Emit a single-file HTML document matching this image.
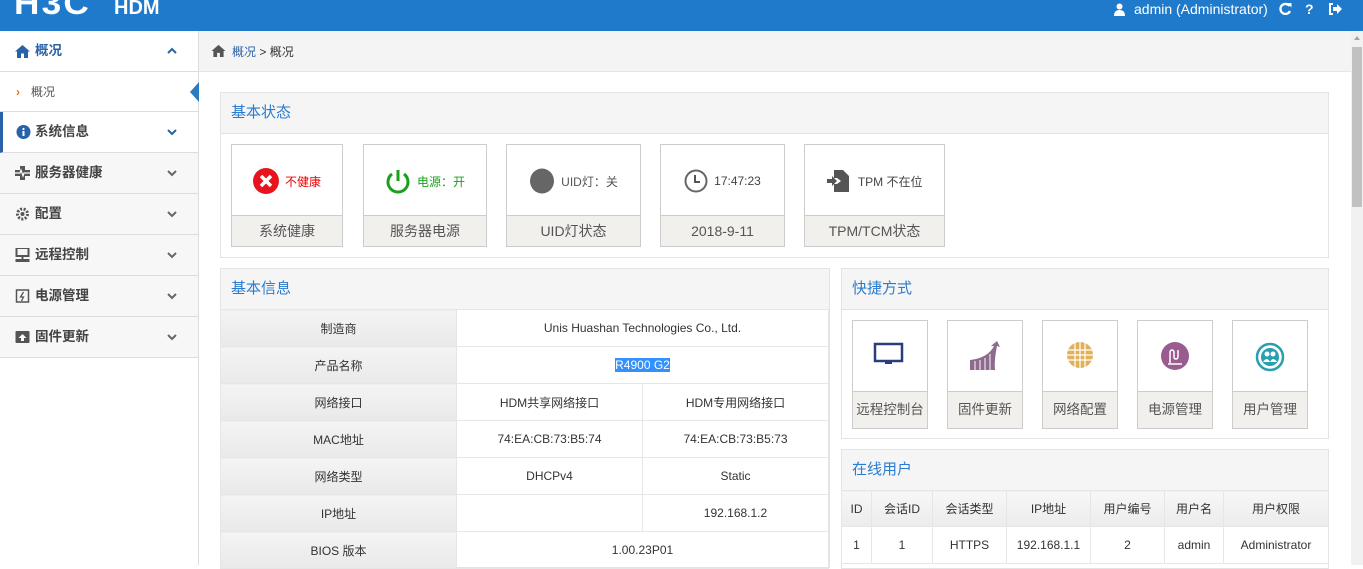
<!DOCTYPE html>
<html><head><meta charset="utf-8"><style>
*{box-sizing:border-box;margin:0;padding:0}
body{width:1363px;height:565px;overflow:hidden;font-family:"Liberation Sans","Noto Sans CJK SC",sans-serif;font-size:13px;color:#333;background:#fff;position:relative}
.abs{position:absolute}
#hdr{left:0;top:0;width:1363px;height:31px;background:#1f7acb;color:#fff;overflow:hidden}
#side{left:0;top:31px;width:199px;height:534px;background:#fff;border-right:1px solid #ddd}
.mi{position:absolute;left:0;width:198px;height:41px;border-bottom:1px solid #ddd;background:#f7f7f7;font-size:13.5px;font-weight:bold;color:#444;line-height:40px;padding-left:35px}
.mi .ic{position:absolute;left:15px;top:13px;width:15px;height:14px}
.mi .ch{position:absolute;left:166px;top:16px}
.panel{position:absolute;border:1px solid #e3e3e3;background:#fff}
.ph{height:41px;background:#f5f5f5;border-bottom:1px solid #e3e3e3;color:#2b7bcf;font-size:15px;line-height:40px;padding-left:10px}
.card{position:absolute;top:144px;height:103px;border:1px solid #ccc;background:#fff}
.card .lb{position:absolute;left:0;right:0;bottom:0;height:31px;border-top:1px solid #ccc;background:#f1f0ec;text-align:center;line-height:30px;font-size:14px;color:#555}
.card .tp{position:absolute;left:0;right:0;top:22px;height:28px;display:flex;align-items:center;justify-content:center;font-size:12px;gap:6px}
table{border-collapse:collapse}
.info td{height:37px;border:1px solid #e6e6e6;text-align:center;font-size:12px;color:#333;padding:0}
.info td.k{background:linear-gradient(#f4f4f4,#e9e9e9);width:236px}
.qc{position:absolute;top:320px;width:76px;height:109px;border:1px solid #ccc;background:#fff}
.qc .lb{position:absolute;left:0;right:0;bottom:0;height:37px;border-top:1px solid #ccc;background:#f1f0ec;text-align:center;line-height:36px;font-size:13.5px;color:#555}
.qc svg{position:absolute;left:20px;top:20px}
.ou td{border:1px solid #e6e6e6;text-align:center;font-size:12px;height:37px;padding:0}
.ou tr.h td{background:linear-gradient(#f7f7f7,#ececec);height:36px}
</style></head><body>
<div id="hdr" class="abs">
 <div class="abs" style="left:14px;top:-15px;font-size:32px;font-weight:bold;letter-spacing:2px;transform:scaleX(1.1);transform-origin:left top">H3C</div>
 <div class="abs" style="left:114px;top:-3px;font-size:20px;font-weight:bold">HDM</div>
 <svg class="abs" style="left:1113px;top:3px" width="13" height="13" viewBox="0 0 13 13"><circle cx="6.5" cy="3.5" r="3" fill="#fff"/><path d="M1 13 Q1 7 6.5 7 Q12 7 12 13Z" fill="#fff"/></svg>
 <div class="abs" style="left:1134px;top:1px;font-size:14px">admin (Administrator)</div>
 <svg class="abs" style="left:1279px;top:2px" width="13" height="13" viewBox="0 0 13 13"><path d="M10.5 4A5 5 0 1 0 11 9" fill="none" stroke="#fff" stroke-width="2.3"/><path d="M8 1H12.5V5.5Z" fill="#fff"/></svg>
 <div class="abs" style="left:1305px;top:1px;font-size:14px;font-weight:bold">?</div>
 <svg class="abs" style="left:1328px;top:3px" width="14" height="12" viewBox="0 0 14 12"><path d="M5 1H2V11H5" stroke="#fff" stroke-width="2" fill="none"/><path d="M5 4H9V1L14 6L9 11V8H5Z" fill="#fff"/></svg>
</div>
<div id="side" class="abs">
 <div class="mi" style="top:0;background:#fff;color:#2a62a8"><svg class="ic" viewBox="0 0 15 14"><path d="M7.5 1L0 7.5H2V14H6V9.5H9V14H13V7.5H15Z" fill="#2a62a8"/></svg>概况<svg class="ch" width="12" height="8" viewBox="0 0 12 8"><path d="M2 6L6 2L10 6" stroke="#2a62a8" stroke-width="2" fill="none"/></svg></div>
 <div class="mi" style="top:41px;height:40px;background:#fff;font-weight:normal;font-size:12px;color:#555;padding-left:31px;line-height:40px;border-bottom:1px solid #ddd"><span style="position:absolute;left:16px;color:#f06a2a;font-weight:bold">›</span>概况
  <div class="abs" style="left:190px;top:10px;width:0;height:0;border-top:10px solid transparent;border-bottom:10px solid transparent;border-right:9px solid #2a7bbf"></div></div>
 <div class="mi" style="top:81px;background:#fff;border-left:3px solid #2a62a8;padding-left:32px"><svg class="ic" style="left:13px" viewBox="0 0 14 14"><circle cx="7" cy="7" r="7" fill="#2a62a8"/><rect x="6" y="6" width="2" height="5" fill="#fff"/><circle cx="7" cy="4" r="1.1" fill="#fff"/></svg>系统信息<svg class="ch" style="left:163px" width="12" height="8" viewBox="0 0 12 8"><path d="M2 2L6 6L10 2" stroke="#2a62a8" stroke-width="2" fill="none"/></svg></div>
 <div class="mi" style="top:122px"><svg class="ic" viewBox="0 0 15 14"><path d="M5 0H10V4H15V10H10V14H5V10H0V4H5Z" fill="#555"/><path d="M0 7H5L6 4L8 10L9 7H15" stroke="#fff" stroke-width="1.2" fill="none"/></svg>服务器健康<svg class="ch" width="12" height="8" viewBox="0 0 12 8"><path d="M2 2L6 6L10 2" stroke="#666" stroke-width="2" fill="none"/></svg></div>
 <div class="mi" style="top:163px"><svg class="ic" viewBox="0 0 14 14"><circle cx="7" cy="7" r="5" fill="none" stroke="#555" stroke-width="3" stroke-dasharray="2 1.5"/><circle cx="7" cy="7" r="2" fill="#555"/></svg>配置<svg class="ch" width="12" height="8" viewBox="0 0 12 8"><path d="M2 2L6 6L10 2" stroke="#666" stroke-width="2" fill="none"/></svg></div>
 <div class="mi" style="top:204px"><svg class="ic" viewBox="0 0 14 14"><rect x="1" y="0" width="12" height="8" fill="none" stroke="#555" stroke-width="2"/><rect x="6" y="8" width="2" height="3" fill="#555"/><rect x="0" y="11" width="14" height="3" fill="#555"/></svg>远程控制<svg class="ch" width="12" height="8" viewBox="0 0 12 8"><path d="M2 2L6 6L10 2" stroke="#666" stroke-width="2" fill="none"/></svg></div>
 <div class="mi" style="top:245px"><svg class="ic" viewBox="0 0 14 14"><rect x="1" y="1" width="12" height="12" fill="none" stroke="#555" stroke-width="1.5"/><path d="M8 3L5 8H8L6 12" stroke="#555" stroke-width="1.3" fill="none"/></svg>电源管理<svg class="ch" width="12" height="8" viewBox="0 0 12 8"><path d="M2 2L6 6L10 2" stroke="#666" stroke-width="2" fill="none"/></svg></div>
 <div class="mi" style="top:286px"><svg class="ic" viewBox="0 0 14 14"><rect x="0" y="1" width="14" height="12" rx="1" fill="#555"/><path d="M7 4L11 8H3Z" fill="#fff"/><rect x="5.5" y="8" width="3" height="3" fill="#fff"/></svg>固件更新<svg class="ch" width="12" height="8" viewBox="0 0 12 8"><path d="M2 2L6 6L10 2" stroke="#666" stroke-width="2" fill="none"/></svg></div>
</div>
<div class="abs" style="left:199px;top:31px;width:1152px;height:41px;background:#f4f4f4;border-bottom:1px solid #e5e5e5">
 <svg class="abs" style="left:12px;top:13px" width="15" height="13" viewBox="0 0 15 14"><path d="M7.5 1L0 7.5H2V14H6V9.5H9V14H13V7.5H15Z" fill="#555"/></svg>
 <div class="abs" style="left:33px;top:12px;font-size:12px"><span style="color:#2a62a8">概况</span> &gt; 概况</div>
</div>
<div class="abs" style="left:1351px;top:31px;width:12px;height:534px;background:#f1f1f1"><div style="position:absolute;left:1px;top:16px;width:10px;height:160px;background:#c1c1c1"></div><div style="position:absolute;left:3px;top:5px;border-left:3px solid transparent;border-right:3px solid transparent;border-bottom:4px solid #a3a3a3"></div></div>

<div class="panel" style="left:220px;top:92px;width:1109px;height:166px"><div class="ph">基本状态</div></div>
<div class="card" style="left:231px;width:112px"><div class="tp" style="color:#e00"><svg width="26" height="26" viewBox="0 0 26 26"><circle cx="13" cy="13" r="13" fill="#e8141d"/><path d="M8 8L18 18M18 8L8 18" stroke="#fff" stroke-width="3.5"/></svg>不健康</div><div class="lb">系统健康</div></div>
<div class="card" style="left:363px;width:124px"><div class="tp" style="color:#1aa11a"><svg width="26" height="26" viewBox="0 0 26 26"><path d="M7 6A10 10 0 1 0 19 6" fill="none" stroke="#1aa11a" stroke-width="3"/><path d="M13 2V13" stroke="#1aa11a" stroke-width="3"/></svg>电源：开</div><div class="lb">服务器电源</div></div>
<div class="card" style="left:506px;width:135px"><div class="tp" style="color:#555"><svg width="26" height="26"><ellipse cx="13" cy="13" rx="12" ry="12.5" fill="#666"/></svg>UID灯：关</div><div class="lb">UID灯状态</div></div>
<div class="card" style="left:660px;width:125px"><div class="tp" style="color:#444"><svg width="24" height="24" viewBox="0 0 24 24"><circle cx="12" cy="12" r="10.5" fill="none" stroke="#666" stroke-width="2"/><path d="M11 6V13H16" stroke="#555" stroke-width="2" fill="none"/></svg>17:47:23</div><div class="lb">2018-9-11</div></div>
<div class="card" style="left:804px;width:141px"><div class="tp" style="color:#444"><svg width="22" height="24" viewBox="0 0 22 24"><path d="M7 1H16L22 7V23H7V15H10L14 12L10 9H7Z" fill="#555"/><path d="M0 10H5V7L10 12L5 17V14H0Z" fill="#555"/></svg>&nbsp;TPM 不在位</div><div class="lb">TPM/TCM状态</div></div>

<div class="panel" style="left:220px;top:268px;width:610px;height:300px"><div class="ph">基本信息</div>
<table class="info" style="width:609px;margin-left:-1px;margin-top:-1px">
<tr><td class="k">制造商</td><td colspan="2">Unis Huashan Technologies Co., Ltd.</td></tr>
<tr><td class="k">产品名称</td><td colspan="2"><span style="background:#3390ff;color:#fff">R4900 G2</span></td></tr>
<tr><td class="k">网络接口</td><td>HDM共享网络接口</td><td>HDM专用网络接口</td></tr>
<tr><td class="k">MAC地址</td><td>74:EA:CB:73:B5:74</td><td>74:EA:CB:73:B5:73</td></tr>
<tr><td class="k">网络类型</td><td>DHCPv4</td><td>Static</td></tr>
<tr><td class="k">IP地址</td><td></td><td>192.168.1.2</td></tr>
<tr><td class="k">BIOS 版本</td><td colspan="2">1.00.23P01</td></tr>
</table></div>

<div class="panel" style="left:841px;top:268px;width:488px;height:171px"><div class="ph">快捷方式</div></div>
<div class="qc" style="left:852px"><svg width="34" height="30" viewBox="0 0 34 30"><rect x="2" y="3" width="27" height="17" fill="none" stroke="#2c3e7a" stroke-width="2.5"/><rect x="12" y="21" width="7" height="2" fill="#2c3e7a"/></svg><div class="lb">远程控制台</div></div>
<div class="qc" style="left:947px"><svg width="34" height="32" viewBox="0 0 34 32"><path d="M2 29V19Q20 17 26 5L23 5L29 0L32 6L29 5Q26 20 27 29Z" fill="#8e6a8e"/><path d="M7 20V29M12 19V29M17 17V29M22 13V29" stroke="#fff" stroke-width="1"/></svg><div class="lb">固件更新</div></div>
<div class="qc" style="left:1042px"><svg width="34" height="32" viewBox="0 0 34 32"><circle cx="17" cy="14" r="13" fill="#e0b15a"/><path d="M4 9H30M4 14H30M4 19H30M12 1V28M17 1V28M22 1V28" stroke="#fff" stroke-width="1.2"/></svg><div class="lb">网络配置</div></div>
<div class="qc" style="left:1137px"><svg width="34" height="32" viewBox="0 0 34 32"><circle cx="17" cy="15" r="14" fill="#9a5b8f"/><path d="M12 22V12Q12 9 14 9Q16 9 16 12V16Q16 18 18 18Q20 18 20 15V9M10 23H24" stroke="#fff" stroke-width="1.5" fill="none"/></svg><div class="lb">电源管理</div></div>
<div class="qc" style="left:1232px"><svg width="34" height="32" viewBox="0 0 34 32"><circle cx="17" cy="16" r="13" fill="none" stroke="#2a9faf" stroke-width="2.5"/><circle cx="17" cy="16" r="9" fill="#2a9faf"/><circle cx="14" cy="13" r="2.5" fill="#fff"/><circle cx="20" cy="13" r="2.5" fill="#fff"/><path d="M10 21Q14 15 17 21Q20 15 24 21Z" fill="#fff"/></svg><div class="lb">用户管理</div></div>

<div class="panel" style="left:841px;top:449px;width:488px;height:120px"><div class="ph">在线用户</div>
<table class="ou" style="width:488px;margin-left:-1px;margin-top:-1px">
<tr class="h"><td style="width:30px">ID</td><td style="width:61px">会话ID</td><td style="width:74px">会话类型</td><td style="width:84px">IP地址</td><td style="width:74px">用户编号</td><td style="width:59px">用户名</td><td>用户权限</td></tr>
<tr><td>1</td><td>1</td><td>HTTPS</td><td>192.168.1.1</td><td>2</td><td>admin</td><td>Administrator</td></tr>
</table></div>
</body></html>
